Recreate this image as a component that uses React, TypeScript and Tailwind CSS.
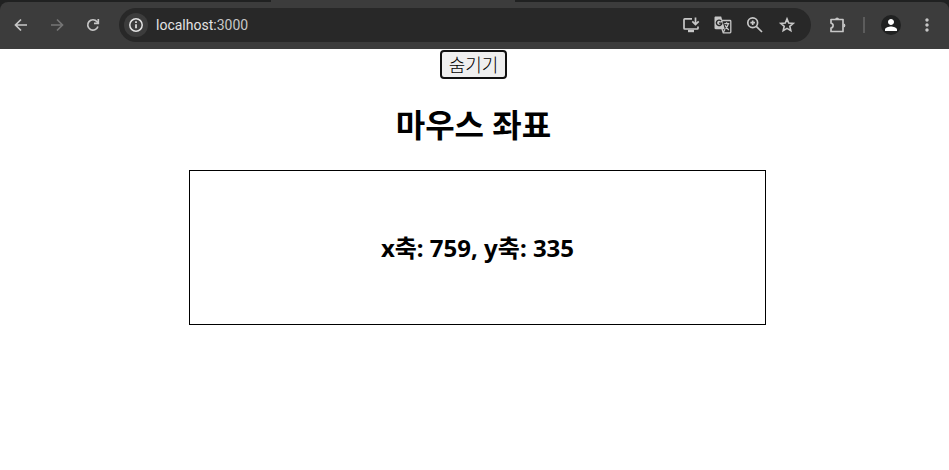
import { useState } from 'react';
import type { MouseEvent, ReactNode } from 'react';
import { MdMoreVert, MdPerson } from 'react-icons/md';

const Icon = ({ children }: { children: ReactNode }) => (
  <svg viewBox="0 0 18 18" className="w-[18px] h-[18px]" fill="none" stroke="currentColor" strokeWidth="1.7">
    {children}
  </svg>
);

const BackIcon = () => (
  <Icon>
    <path d="M15 9H4M9 3.500 3.500 9 9 14.500" />
  </Icon>
);

const ForwardIcon = () => (
  <Icon>
    <path d="M3 9h11M9 3.500 14.500 9 9 14.500" />
  </Icon>
);

const ReloadIcon = () => (
  <Icon>
    <path d="M13.900 10.500A5.200 5.200 0 1 1 13 5.700L14.200 7" />
    <path d="M14.300 3v4.300H10" />
  </Icon>
);

const InfoIcon = () => (
  <Icon>
    <circle cx="9" cy="9" r="6.200" strokeWidth="1.500" />
    <path d="M9 8.200v4M9 5.300v1.600" />
  </Icon>
);

const InstallIcon = () => (
  <Icon>
    <path d="M10 2.800H2.800a.8.8 0 0 0-.8.8v8.600c0 .5.3.8.8.8h12.400c.5 0 .8-.3.8-.8V10.500" />
    <path d="M13.500 1.500v7M10.300 5.400l3.200 3.200 3.200-3.200" />
    <path d="M6 15h6" strokeWidth="2.400" />
  </Icon>
);

const TranslateIcon = () => (
  <Icon>
    <path d="M8 4.500h8c.5 0 .8.3.8.8v10.700c0 .5-.3.8-.8.8H9.300L8 13" strokeWidth="1.300" />
    <path d="M1.700.5h5.500l3.600 12.700H1.700C1 13.200.5 12.700.5 12V1.700C.5 1 1 .5 1.700.5z" fill="currentColor" stroke="none" />
    <path d="M7 4.900a2.700 2.700 0 1 0 .8 2.200H5" stroke="#282828" strokeWidth="1.400" />
    <path d="M10.300 7.600h5M12.600 6.300v1.300M14.400 7.600c-.4 2-1.600 3.700-3 5M11.200 9.200c.8 1.900 2 3.300 3.600 4.800" strokeWidth="1.300" />
    <path d="M9.200 16.500 11 13.200" strokeWidth="1.300" />
  </Icon>
);

const ZoomIcon = () => (
  <Icon>
    <circle cx="6.700" cy="6.700" r="4.900" />
    <path d="m10.300 10.300 5.700 5.700M6.700 4.400V9M4.400 6.700H9" />
  </Icon>
);

const StarIcon = () => (
  <Icon>
    <path
      d="m9 2.900 1.700 4.100 4.500.4-3.400 2.900 1 4.400L9 12.400l-3.800 2.300 1-4.400-3.400-2.900 4.500-.4z"
      strokeWidth="1.600"
    />
  </Icon>
);

const PuzzleIcon = () => (
  <Icon>
    <path d="M2 3.500h12V15.500H2v-3.400c1.300-.3 2.100-1.300 2.100-2.500S3.300 7.400 2 7.100z" strokeLinejoin="round" />
    <path d="M6.200 3.300a1.900 1.900 0 0 1 3.800 0zM14.500 7.600a1.900 1.900 0 0 1 0 3.800z" fill="currentColor" stroke="none" />
  </Icon>
);

const BrowserBar = () => {
  return (
    <header className="bg-[#202121] pt-0.5">
      <div className="relative flex items-center h-[47px] px-3 pb-0.5 bg-[#3c3c3c] rounded-t-lg text-[#c7c7c7]">
        <div className="absolute -top-0.5 left-[271px] w-[244px] h-0.5 bg-[#3c3c3c]" />
        <nav className="flex items-center gap-[18px] mr-[17px]">
          <button aria-label="Back">
            <BackIcon />
          </button>
          <button aria-label="Forward" className="text-[#757575]">
            <ForwardIcon />
          </button>
          <button aria-label="Reload">
            <ReloadIcon />
          </button>
        </nav>

        <div className="flex flex-1 items-center h-[34px] pl-[5px] pr-[15px] bg-[#282828] rounded-full">
          <button
            aria-label="Site information"
            className="flex items-center justify-center w-6 h-6 rounded-full bg-[#3c3c3c] text-[#e3e3e3]"
          >
            <InfoIcon />
          </button>
          <div className="flex-1 ml-2 font-[Roboto,sans-serif] text-sm text-[#e3e3e3]">
            localhost:<span className="text-[#c7c7c7]">3000</span>
          </div>
          <div className="flex items-center gap-3.5">
            <button aria-label="Install app">
              <InstallIcon />
            </button>
            <button aria-label="Translate">
              <TranslateIcon />
            </button>
            <button aria-label="Zoom">
              <ZoomIcon />
            </button>
            <button aria-label="Bookmark">
              <StarIcon />
            </button>
          </div>
        </div>

        <div className="flex items-center ml-[18px]">
          <button aria-label="Extensions">
            <PuzzleIcon />
          </button>
          <div className="w-0.5 h-4 mx-4 bg-[#5c5c5c]" />
          <button
            aria-label="Profile"
            className="flex items-center justify-center w-5 h-5 rounded-full bg-[#202121] text-white"
          >
            <MdPerson size={18} />
          </button>
          <button aria-label="Menu" className="ml-4">
            <MdMoreVert size={20} />
          </button>
        </div>
      </div>
    </header>
  );
};

const MouseTracker = () => {
  const [position, setPosition] = useState({ x: 759, y: 335 });

  const handleMouseMove = (e: MouseEvent<HTMLDivElement>) => {
    setPosition({ x: e.clientX, y: e.clientY });
  };

  return (
    <section>
      <h1 className="mt-6 text-[32px] leading-[44px] font-bold text-center">마우스 좌표</h1>
      <div
        onMouseMove={handleMouseMove}
        className="w-[calc(60%+8px)] mt-[23px] ml-[20%] py-[60px] border border-black"
      >
        <h2 className="text-2xl leading-[33px] font-bold text-center">
          x축: {position.x}, y축: {position.y}
        </h2>
      </div>
    </section>
  );
};

const App = () => {
  const [isVisible, setIsVisible] = useState(true);

  return (
    <div className="min-h-screen bg-white text-black font-['Noto_Sans','Noto_Sans_CJK_KR',sans-serif]">
      <BrowserBar />
      <main className="pt-px pr-0.5">
        <button
          onClick={() => setIsVisible(!isVisible)}
          className="block mx-auto px-[7px] border-2 border-[#101010] rounded bg-[#efefef] text-lg leading-[25px] font-['Noto_Sans_CJK_KR',sans-serif] font-light"
        >
          {isVisible ? '숨기기' : '보이기'}
        </button>
        {isVisible && <MouseTracker />}
      </main>
    </div>
  );
};

export default App;
